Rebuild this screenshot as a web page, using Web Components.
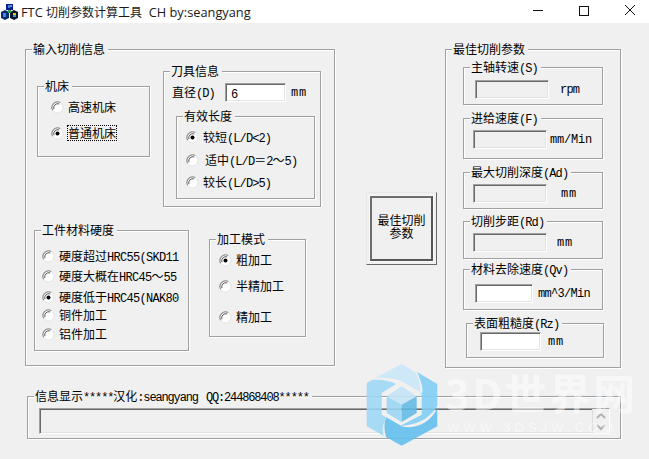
<!DOCTYPE html>
<html><head><meta charset="utf-8"><style>
html,body{margin:0;padding:0}
body{width:649px;height:459px;overflow:hidden;background:#f0f0f0;position:relative;font:12px/14px "Noto Sans CJK SC",sans-serif;color:#000}
.row{display:flex;align-items:flex-start}
i{font:normal 12px/14px "Liberation Mono",monospace;white-space:pre;letter-spacing:-.9px;opacity:.999}
i.w{letter-spacing:-.7px}
i.n{letter-spacing:-1.15px;word-spacing:-2px}
i.m{letter-spacing:.8px}
i.u{letter-spacing:-.2px}
i.r{letter-spacing:-.8px}
i.c{letter-spacing:-.7px}
b{font:12px/16px "Noto Sans CJK SC",sans-serif}
</style></head><body>
<template id="t-group"><style>
:host{display:block;box-sizing:border-box;position:relative;border:1px solid #a0a0a0;box-shadow:1px 1px 0 #fff,inset 1px 1px 0 #fff}
.lb{position:absolute;top:-10px;left:6px;background:#f0f0f0;padding:0 3px 0 1px;line-height:17px;height:16px;white-space:nowrap}
</style><div class="lb" part="lb"><slot name="label"></slot></div><slot></slot></template>
<template id="t-radio"><style>
:host{display:flex;align-items:center;height:16px;white-space:nowrap;overflow:hidden}
svg{flex:none;width:13px;height:13px;margin-right:4px}
.t{line-height:15px;box-sizing:border-box;height:16px}
:host([focused]) .t{outline:1px dotted #000;outline-offset:-1px;padding:0 1px;margin-left:-1px}
</style><svg viewBox="0 0 13 13"><circle cx="6.5" cy="6.5" r="5.5" fill="#fff" stroke="#e3e3e3"/><path d="M1.6 9.2A5.6 5.6 0 0 1 9.2 1.6" fill="none" stroke="#8a8a8a" stroke-width="1.1"/><path d="M2.9 8.2A4.2 4.2 0 0 1 8.2 2.9" fill="none" stroke="#5a5a5a"/><circle class="d" cx="6.5" cy="6.5" r="2" fill="#000"/></svg><span class="t"><slot></slot></span></template>
<template id="t-field"><style>
:host{display:block;box-sizing:border-box;height:19px;background:#f0f0f0;border:1px solid;border-color:#a0a0a0 #fff #fff #a0a0a0;box-shadow:inset 1px 1px 0 #696969,inset -1px -1px 0 #e3e3e3;padding:2px 0 0 5px;line-height:14px;flex:none}
:host([white]){background:#fff}
</style><slot></slot></template>
<template id="t-bar"><style>
:host{display:flex;align-items:center;height:23px;background:#fff;padding-left:1px;font:12.8px/16px "Open Sans","Noto Sans CJK SC",sans-serif;color:#1a1a1a}
svg.i{width:17px;height:17px;margin-right:3px;flex:none}
.t{flex:1;white-space:pre}
.c{display:flex;margin-right:-4px}
.c svg{width:46px;height:23px;display:block}
</style><svg class="i" viewBox="0 0 17 17"><path fill="#0b1f8a" d="M5 1h7v6H5z"/><path fill="#3f7df0" d="M7 2h2v3H7z"/><path fill="#fff" d="M9.500 2h1v2h-1z"/><path fill="#0a2a70" d="M0 9l4-2 4 2v6l-4 2-4-2z"/><path fill="#0c1228" d="M9 9l4-2 4 2v6l-4 2-4-2z"/><path fill="#3a8ae8" d="M2 10h3v4H2z"/><path fill="#e8c020" d="M12 10h3v2h-3z"/><path fill="#2aa0d0" d="M12 12h3v2h-3z"/><path fill="#35a048" d="M7 7h3v3H7z"/></svg><span class="t"><slot></slot></span><span class="c"><svg viewBox="0 0 46 23"><path d="M18 10.500h10" stroke="#111" fill="none"/></svg><svg viewBox="0 0 46 23"><rect x="18.500" y="6.500" width="9" height="9" fill="none" stroke="#111"/></svg><svg viewBox="0 0 46 23"><path d="M18 5l10 10M28 5L18 15" stroke="#111" fill="none"/></svg></span></template>
<template id="t-button"><style>
:host{display:flex;align-items:center;justify-content:center;text-align:center;box-sizing:border-box;width:71px;height:73px;line-height:12.5px;background:#f0f0f0;border:1px solid;border-color:#e8e8e8 #696969 #696969 #e8e8e8;padding:0}
.b{box-sizing:border-box;width:63px;height:65px;display:flex;align-items:center;justify-content:center;border:2px solid #6d6d6d;border-right-color:#555;border-bottom-color:#555;box-shadow:0 0 0 1px #f8f8f8;padding:0 4px 4px}
</style><div class="b"><slot></slot></div></template>
<template id="t-scroll"><style>
:host{display:flex;flex-direction:column;box-sizing:border-box;width:17px;height:100%;background:#f0f0f0;border-left:1px solid #dcdcdc;padding:0}
svg{width:16px;height:12px;display:block}
</style><svg viewBox="0 0 16 12"><path d="M4 9l4-4 4 4" fill="none" stroke="#b4b4b4" stroke-width="2"/></svg><svg viewBox="0 0 16 12"><path d="M4 4l4 4 4-4" fill="none" stroke="#b4b4b4" stroke-width="2"/></svg></template>
<template id="t-mark"><style>
:host{position:absolute;left:366px;top:364px;width:265px;height:84px;pointer-events:none;display:block}
svg{position:absolute;left:0;top:0;width:73px;height:83px;opacity:.88}
.a{position:absolute;left:79px;top:6px;font:700 42px/44px "Noto Sans CJK SC",sans-serif;color:rgba(255,255,255,.5);white-space:nowrap;letter-spacing:2.4px}
.b{position:absolute;left:81px;top:57px;font:400 13px/14px "Liberation Sans",sans-serif;color:rgba(255,255,255,.55);white-space:nowrap;letter-spacing:4.1px}
</style><svg viewBox="0 0 73 83">
<path d="M9 14L35.700 0 49 8C55 17 56 30 52 40L55.700 29 35.700 17.300C28 14 18 13 9 14z" fill="#cbe8f8"/>
<path d="M51 8L71.300 20V42C62 57 48 61 34 62L55.700 50.700V29C58 27 55 16 51 8z" fill="#80cff5"/>
<path d="M71.300 44V62.300L35.700 81.700 20 73C18 66 18 58 20 53L35.700 62.300C50 66 65 58 71.300 44z" fill="#5fbeee"/>
<path d="M.7 19L6 16C16 15 24 17 30 20L15.700 29V50.700L21 54C16 60 16 68 18 72L.7 62.300z" fill="#9cd8f6"/>
<path d="M35.700 22.300L50.700 32.300 35.700 40.700 20.700 32.300z" fill="#c3e5f7"/>
<path d="M20.700 32.300L35.700 40.700V58L20.700 49z" fill="#9bd6f4"/>
<path d="M50.700 32.300V49L35.700 58V40.700z" fill="#62bae6"/>
</svg><span class="a">3D世界网</span><span class="b">WWW.3DSJW.COM</span></template>
<fx-bar>FTC <b>切削参数计算工具</b>  CH by:seangyang</fx-bar>
<div class="row" style="margin:26px 0 0 25px">
 <fx-group style="width:310px;height:317px;flex:none">
  <span slot="label">输入切削信息</span>
  <div class="row" style="margin-top:21px">
   <fx-group style="width:113px;height:71px;margin:15px 0 0 11px;flex:none;padding:12px 0 0 13px"><span slot="label">机床</span>
     <fx-radio>高速机床</fx-radio>
     <fx-radio checked focused style="margin-top:10px">普通机床</fx-radio>
   </fx-group>
   <fx-group style="width:158px;height:136px;margin-left:13px;flex:none;padding:11px 0 0 8px"><span slot="label">刀具信息</span>
     <div class="row" style="align-items:center;height:19px"><span style="width:53px">直径<i>(D)</i></span><fx-field white style="width:61px"><i>6</i></fx-field><i class="m" style="margin-left:5px">mm</i></div>
     <fx-group style="width:139px;height:83px;margin:14px 0 0 4px;padding:12px 0 0 9px"><span slot="label">有效长度</span>
       <fx-radio checked>较短<i>(L/D&lt;2)</i></fx-radio>
       <fx-radio style="margin-top:7px"><span style="margin-left:2px">适中</span><i>(L/D</i>＝<i>2</i>～<i>5)</i></fx-radio>
       <fx-radio style="margin-top:6px">较长<i>(L/D&gt;5)</i></fx-radio>
     </fx-group>
   </fx-group>
  </div>
  <div class="row" style="margin-top:23px">
   <fx-group style="width:155px;height:121px;margin-left:8px;flex:none;padding:17px 8px 0 7px"><span slot="label">工件材料硬度</span>
     <fx-radio>硬度超过<i class="w">HRC55(SKD11)</i></fx-radio>
     <fx-radio style="margin-top:4px">硬度大概在<i class="w">HRC45</i>～<i class="w">55</i></fx-radio>
     <fx-radio checked style="margin-top:5px">硬度低于<i class="w">HRC45(NAK80)</i></fx-radio>
     <fx-radio style="margin-top:2px">铜件加工</fx-radio>
     <fx-radio style="margin-top:3px">铝件加工</fx-radio>
   </fx-group>
   <fx-group style="width:97px;height:98px;margin:9px 0 0 20px;flex:none;padding:12px 0 0 9px"><span slot="label">加工模式</span>
     <fx-radio checked>粗加工</fx-radio>
     <fx-radio style="margin-top:10px">半精加工</fx-radio>
     <fx-radio style="margin-top:15px">精加工</fx-radio>
   </fx-group>
  </div>
 </fx-group>
 <fx-button style="margin:143px 0 0 31px;flex:none">最佳切削参数</fx-button>
 <fx-group style="width:176px;height:319px;margin-left:8px;flex:none;padding:17px 0 0 17px"><span slot="label">最佳切削参数</span>
  <fx-group style="width:140px;height:38px;padding:12px 0 0 11px"><span slot="label">主轴转速<i>(S)</i></span><div class="row" style="align-items:center"><fx-field style="width:74px"></fx-field><i class="r" style="margin-left:11px">rpm</i></div></fx-group>
  <fx-group style="width:140px;height:41px;margin-top:13px;padding:11px 0 0 9px"><span slot="label">进给速度<i>(F)</i></span><div class="row" style="align-items:center"><fx-field style="width:74px"></fx-field><i class="u" style="margin-left:3px">mm/Min</i></div></fx-group>
  <fx-group style="width:140px;height:37px;margin-top:13px;padding:11px 0 0 9px"><span slot="label">最大切削深度<i>(Ad)</i></span><div class="row" style="align-items:center"><fx-field style="width:74px"></fx-field><i class="m" style="margin-left:14px">mm</i></div></fx-group>
  <fx-group style="width:140px;height:38px;margin-top:12px;padding:11px 0 0 9px"><span slot="label">切削步距<i>(Rd)</i></span><div class="row" style="align-items:center"><fx-field style="width:74px"></fx-field><i class="m" style="margin-left:10px">mm</i></div></fx-group>
  <fx-group style="width:140px;height:41px;margin-top:10px;padding:14px 0 0 11px"><span slot="label">材料去除速度<i>(Qv)</i></span><div class="row" style="align-items:center"><fx-field white style="width:58px"></fx-field><i class="c" style="margin-left:5px">mm^3/Min</i></div></fx-group>
  <fx-group style="width:138px;height:35px;margin:13px 0 0 3px;padding:8px 0 0 13px"><span slot="label">表面粗糙度<i>(Rz)</i></span><div class="row" style="align-items:center"><fx-field white style="width:61px"></fx-field><i class="m" style="margin-left:7px">mm</i></div></fx-group>
 </fx-group>
</div>
<fx-group style="width:594px;height:43px;margin:28px 0 0 27px;padding:11px 0 0 11px"><span slot="label">信息显示<i class="n">*****</i>汉化<i class="n">:seangyang  QQ:244868408*****</i></span>
 <fx-field style="width:571px;height:26px;padding:0;display:flex;justify-content:flex-end"><fx-scroll></fx-scroll></fx-field>
</fx-group>
<fx-mark></fx-mark>
<script>
function def(n,sel,extra){customElements.define(n,class extends HTMLElement{constructor(){super();this.attachShadow({mode:'open'}).appendChild(document.getElementById(sel).content.cloneNode(true));}connectedCallback(){if(extra)extra(this)}})}
def('fx-group','t-group');
def('fx-radio','t-radio',e=>{if(!e.hasAttribute('checked'))e.shadowRoot.querySelector('.d').remove()});
def('fx-field','t-field');
def('fx-bar','t-bar');
def('fx-button','t-button');
def('fx-scroll','t-scroll');
def('fx-mark','t-mark');
</script>
</body></html>
